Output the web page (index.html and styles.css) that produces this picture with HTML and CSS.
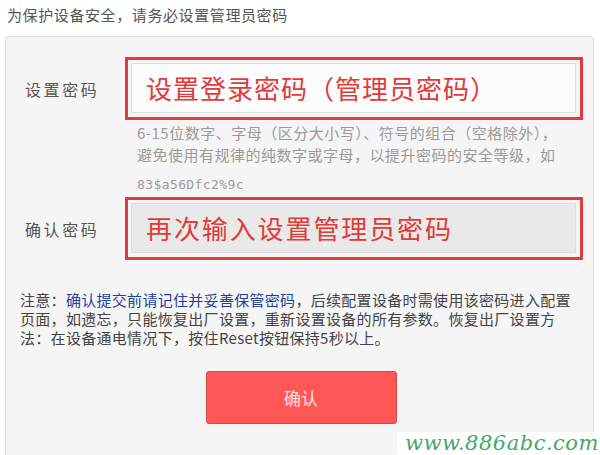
FILE: index.html
```html
<!DOCTYPE html>
<html lang="zh-CN">
<head>
    <meta charset="UTF-8">
    <meta name="viewport" content="width=device-width, initial-scale=1.0">
    <title>设置管理员密码</title>
    <link rel="stylesheet" href="styles.css">
</head>
<body>
    <div class="page">
        <h1 class="title">为保护设备安全，请务必设置管理员密码</h1>

        <div class="panel">
            <div class="row">
                <label class="label" for="pwd">设置密码</label>
                <div class="mark">
                    <div class="field" id="pwd">设置登录密码（管理员密码）</div>
                </div>
            </div>
            <div class="hint">
                <p class="hint-text">6-15位数字、字母（区分大小写）、符号的组合（空格除外），避免使用有规律的纯数字或字母，以提升密码的安全等级，如</p>
                <div class="hint-code">83$a56Dfc2%9c</div>
            </div>

            <div class="row">
                <label class="label" for="pwd2">确认密码</label>
                <div class="mark">
                    <div class="field field-gray" id="pwd2">再次输入设置管理员密码</div>
                </div>
            </div>

            <p class="note">注意：<a class="note-link">确认提交前请记住并妥善保管密码</a>，后续配置设备时需使用该密码进入配置页面，如遗忘，只能恢复出厂设置，重新设置设备的所有参数。恢复出厂设置方法：在设备通电情况下，按住Reset按钮保持5秒以上。</p>

            <div class="actions">
                <button class="btn">确认</button>
            </div>
        </div>

        <div class="watermark">www.886abc.com</div>
    </div>
</body>
</html>
```

FILE: styles.css
```css
body {
    margin: 0;
    background-color: #fff;
    font-family: "Noto Sans CJK SC", "Noto Sans", sans-serif;
}
.page {
    position: relative;
    width: 600px;
    height: 455px;
    overflow: hidden;
}
.title {
    margin: 5px 0 0 7px;
    font-size: 15px;
    line-height: 20px;
    font-weight: normal;
    letter-spacing: 0.6px;
    color: #555;
}
.panel {
    margin: 11px 0 0 5px;
    width: 587px;
    height: 411px;
    background-color: #f5f5f5;
    border: 1px solid #dcdcdc;
    border-radius: 4px;
    padding: 20px 0 0 0;
}
.row {
    display: flex;
    align-items: center;
    padding-left: 19px;
}
.label {
    width: 100px;
    font-size: 16px;
    letter-spacing: 2.6px;
    color: #555;
}
.mark {
    width: 445px;
    border: 3px solid #e23b3b;
    padding: 3px 4px 4px 3px;
}
.field {
    height: 48px;
    border: 1px solid #ddd;
    background-color: #fcfcfc;
    padding-left: 14px;
    font-size: 26px;
    line-height: 48px;
    letter-spacing: 1px;
    color: #e03a3a;
}
.field-gray {
    background-color: #e9e9e9;
    letter-spacing: 1.9px;
}
.hint {
    padding-left: 131px;
    margin-top: 2px;
    margin-bottom: 1px;
    color: #9a9a9a;
    font-size: 15px;
    letter-spacing: 0.5px;
}
.hint-text {
    margin: 0;
    width: 432px;
    line-height: 22px;
}
.hint-code {
    margin-top: 8px;
    line-height: 22px;
    font-family: "DejaVu Sans Mono", monospace;
    font-size: 13px;
    letter-spacing: 0.4px;
}
.note {
    margin: 30px 0 0 14px;
    width: 556px;
    font-size: 15px;
    line-height: 19px;
    letter-spacing: 0.3px;
    color: #444;
}
.note-link {
    color: #1d3f9e;
}
.actions {
    display: flex;
    justify-content: center;
    margin-top: 24px;
    padding-left: 3px;
}
.btn {
    width: 191px;
    height: 53px;
    background-color: #ff5656;
    border: 1px solid #d94646;
    border-radius: 3px;
    color: #fde6e6;
    font-family: "Noto Sans CJK SC", sans-serif;
    font-size: 17px;
    cursor: pointer;
}
.watermark {
    position: absolute;
    left: 397px;
    top: 432px;
    right: 0;
    bottom: 0;
    background-color: #fff;
    padding-left: 8px;
    font-family: "DejaVu Serif", serif;
    font-style: italic;
    font-size: 21px;
    line-height: 22px;
    letter-spacing: 0.5px;
    color: #45a866;
}
```
